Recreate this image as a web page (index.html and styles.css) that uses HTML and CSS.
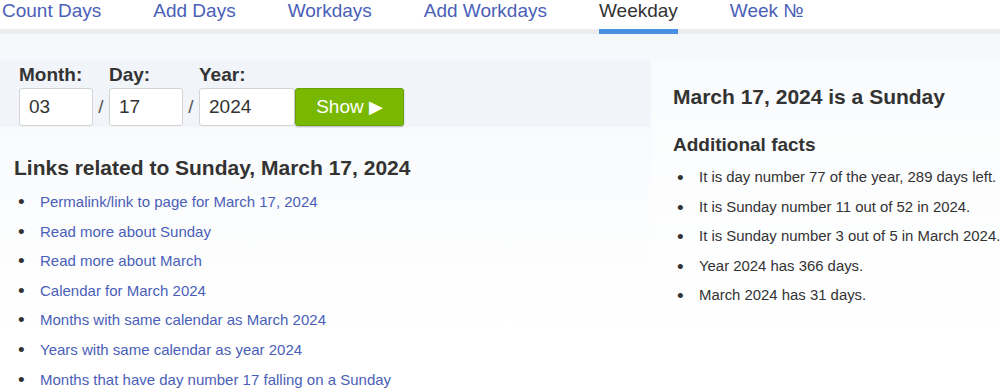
FILE: index.html
```html
<!DOCTYPE html>
<html lang="en">
<head>
    <meta charset="UTF-8">
    <meta name="viewport" content="width=device-width, initial-scale=1.0">
    <title>What day of the week is March 17, 2024?</title>
    <link rel="stylesheet" href="styles.css">
</head>
<body>

    <div class="topnav">
        <a href="#">Count Days</a>
        <a href="#">Add Days</a>
        <a href="#">Workdays</a>
        <a href="#">Add Workdays</a>
        <a href="#" class="active">Weekday</a>
        <a href="#">Week &#8470;</a>
    </div>

    <div class="page">
        <div class="left">
            <form class="date-form" onsubmit="return false">
                <div class="field">
                    <label for="month">Month:</label>
                    <input type="text" id="month" class="small" value="03">
                </div>
                <span class="sep">/</span>
                <div class="field">
                    <label for="day">Day:</label>
                    <input type="text" id="day" class="small" value="17">
                </div>
                <span class="sep">/</span>
                <div class="field">
                    <label for="year">Year:</label>
                    <input type="text" id="year" class="wide" value="2024">
                </div>
                <button type="submit" class="show-btn">Show <span class="arrow">&#9654;</span></button>
            </form>

            <h2>Links related to Sunday, March 17, 2024</h2>
            <ul class="links">
                <li><a href="#">Permalink/link to page for March 17, 2024</a></li>
                <li><a href="#">Read more about Sunday</a></li>
                <li><a href="#">Read more about March</a></li>
                <li><a href="#">Calendar for March 2024</a></li>
                <li><a href="#">Months with same calendar as March 2024</a></li>
                <li><a href="#">Years with same calendar as year 2024</a></li>
                <li><a href="#">Months that have day number 17 falling on a Sunday</a></li>
            </ul>
        </div>

        <div class="right">
            <h2 class="result">March 17, 2024 is a Sunday</h2>
            <h3>Additional facts</h3>
            <ul class="facts">
                <li>It is day number 77 of the year, 289 days left.</li>
                <li>It is Sunday number 11 out of 52 in 2024.</li>
                <li>It is Sunday number 3 out of 5 in March 2024.</li>
                <li>Year 2024 has 366 days.</li>
                <li>March 2024 has 31 days.</li>
            </ul>
        </div>
    </div>

</body>
</html>
```

FILE: styles.css
```css
body {
    font-family: "Liberation Sans", Arial, sans-serif;
    margin: 0;
    color: #333;
    background: linear-gradient(#f4f7fa, #ffffff 330px);
    min-height: 390px;
    overflow: hidden;
}

a {
    color: #4a60b8;
    text-decoration: none;
}

/* top navigation */
.topnav {
    display: flex;
    gap: 52px;
    padding-left: 2px;
    background-color: #fff;
    border-bottom: 5px solid #ececec;
}

.topnav a {
    font-size: 19px;
    line-height: 22px;
    padding-bottom: 7px;
    margin-bottom: -5px;
    border-bottom: 5px solid transparent;
    white-space: nowrap;
}

.topnav a.active {
    color: #333;
    border-bottom-color: #4a90e2;
}

/* columns */
.page {
    display: flex;
    margin-top: 26px;
}

.left {
    width: 651px;
    flex-shrink: 0;
}

.right {
    flex: 1;
    padding: 25px 0 0 22px;
    background: linear-gradient(rgba(255, 255, 255, 0.35), rgba(255, 255, 255, 0.5));
    white-space: nowrap;
}

/* date form */
.date-form {
    display: flex;
    align-items: flex-end;
    padding: 4px 0 1px 19px;
    background-color: #f1f4f8;
}

.field {
    display: flex;
    flex-direction: column;
    gap: 2px;
}

.field label {
    font-size: 19px;
    font-weight: bold;
    line-height: 22px;
}

.field input {
    box-sizing: border-box;
    height: 38px;
    padding: 0 9px;
    font-family: inherit;
    font-size: 19px;
    color: #333;
    background-color: #fff;
    border: 1px solid #d4d4d4;
    border-radius: 3px;
}

.field input.small {
    width: 74px;
}

.field input.wide {
    width: 96px;
}

.sep {
    width: 16px;
    text-align: center;
    font-size: 19px;
    line-height: 38px;
    color: #555;
}

.show-btn {
    box-sizing: border-box;
    width: 109px;
    height: 38px;
    padding: 0;
    font-family: inherit;
    font-size: 19px;
    color: #fff;
    background-color: #78b800;
    border: 1px solid #6aa300;
    border-radius: 3px;
    box-shadow: 0 1px 2px rgba(0, 0, 0, 0.25);
    cursor: pointer;
}

.show-btn .arrow {
    font-family: "DejaVu Sans", sans-serif;
    font-size: 18px;
}

/* headings */
h2 {
    font-size: 21px;
    line-height: 24px;
    margin: 29px 0 0 14px;
}

h2.result {
    margin: 0;
}

h3 {
    font-size: 19px;
    line-height: 22px;
    margin: 25px 0 0 0;
}

/* lists */
ul {
    list-style: none;
    margin: 7px 0 0 0;
    font-size: 15px;
    line-height: 29.6px;
}

ul li {
    display: flex;
}

ul li::before {
    content: "\2022";
    flex-shrink: 0;
    width: 21px;
    font-size: 19px;
    color: #333;
}

ul.links {
    padding-left: 18px;
}

ul.facts {
    padding-left: 4px;
    font-size: 14.9px;
}

ul.links li::before {
    width: 22px;
}

ul.facts li::before {
    width: 22px;
}
```
